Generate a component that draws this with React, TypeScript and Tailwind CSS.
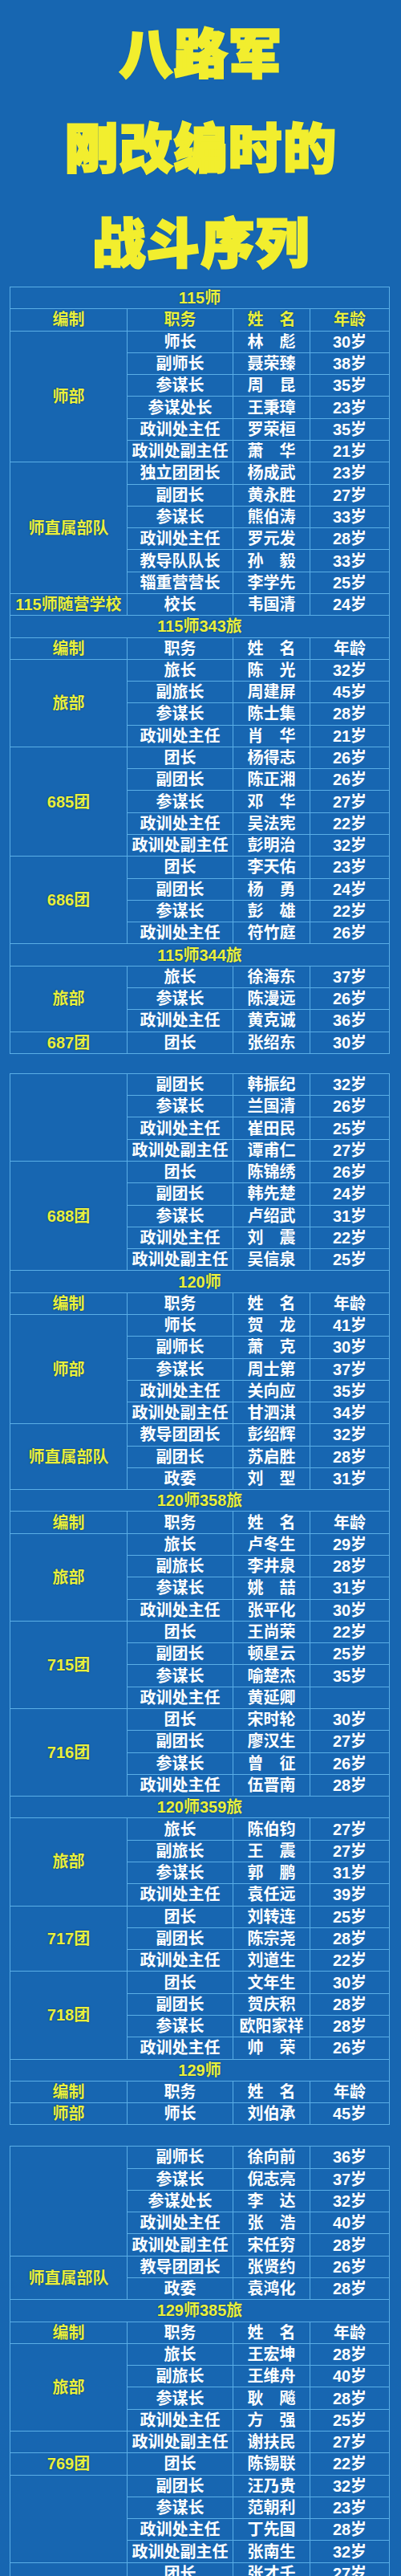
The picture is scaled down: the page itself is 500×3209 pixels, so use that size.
import React from 'react';
import clsx from 'clsx';

type Row = [string, string, string];
type Item =
  | { kind: 'title'; text: string }
  | { kind: 'header'; allYellow?: boolean }
  | { kind: 'group'; label: string; rows: Row[] };

const span: Record<number, string> = {
  1: 'row-span-1',
  2: 'row-span-2',
  3: 'row-span-3',
  4: 'row-span-4',
  5: 'row-span-5',
  6: 'row-span-6',
};

const partA: Item[] = [
  { kind: 'title', text: '115师' },
  { kind: 'header', allYellow: true },
  {
    kind: 'group',
    label: '师部',
    rows: [
      ['师长', '林　彪', '30岁'],
      ['副师长', '聂荣臻', '38岁'],
      ['参谋长', '周　昆', '35岁'],
      ['参谋处长', '王秉璋', '23岁'],
      ['政训处主任', '罗荣桓', '35岁'],
      ['政训处副主任', '萧　华', '21岁'],
    ],
  },
  {
    kind: 'group',
    label: '师直属部队',
    rows: [
      ['独立团团长', '杨成武', '23岁'],
      ['副团长', '黄永胜', '27岁'],
      ['参谋长', '熊伯涛', '33岁'],
      ['政训处主任', '罗元发', '28岁'],
      ['教导队队长', '孙　毅', '33岁'],
      ['辎重营营长', '李学先', '25岁'],
    ],
  },
  { kind: 'group', label: '115师随营学校', rows: [['校长', '韦国清', '24岁']] },
  { kind: 'title', text: '115师343旅' },
  { kind: 'header' },
  {
    kind: 'group',
    label: '旅部',
    rows: [
      ['旅长', '陈　光', '32岁'],
      ['副旅长', '周建屏', '45岁'],
      ['参谋长', '陈士集', '28岁'],
      ['政训处主任', '肖　华', '21岁'],
    ],
  },
  {
    kind: 'group',
    label: '685团',
    rows: [
      ['团长', '杨得志', '26岁'],
      ['副团长', '陈正湘', '26岁'],
      ['参谋长', '邓　华', '27岁'],
      ['政训处主任', '吴法宪', '22岁'],
      ['政训处副主任', '彭明治', '32岁'],
    ],
  },
  {
    kind: 'group',
    label: '686团',
    rows: [
      ['团长', '李天佑', '23岁'],
      ['副团长', '杨　勇', '24岁'],
      ['参谋长', '彭　雄', '22岁'],
      ['政训处主任', '符竹庭', '26岁'],
    ],
  },
  { kind: 'title', text: '115师344旅' },
  {
    kind: 'group',
    label: '旅部',
    rows: [
      ['旅长', '徐海东', '37岁'],
      ['参谋长', '陈漫远', '26岁'],
      ['政训处主任', '黄克诚', '36岁'],
    ],
  },
  { kind: 'group', label: '687团', rows: [['团长', '张绍东', '30岁']] },
];

const partB: Item[] = [
  {
    kind: 'group',
    label: '',
    rows: [
      ['副团长', '韩振纪', '32岁'],
      ['参谋长', '兰国清', '26岁'],
      ['政训处主任', '崔田民', '25岁'],
      ['政训处副主任', '谭甫仁', '27岁'],
    ],
  },
  {
    kind: 'group',
    label: '688团',
    rows: [
      ['团长', '陈锦绣', '26岁'],
      ['副团长', '韩先楚', '24岁'],
      ['参谋长', '卢绍武', '31岁'],
      ['政训处主任', '刘　震', '22岁'],
      ['政训处副主任', '吴信泉', '25岁'],
    ],
  },
  { kind: 'title', text: '120师' },
  { kind: 'header' },
  {
    kind: 'group',
    label: '师部',
    rows: [
      ['师长', '贺　龙', '41岁'],
      ['副师长', '萧　克', '30岁'],
      ['参谋长', '周士第', '37岁'],
      ['政训处主任', '关向应', '35岁'],
      ['政训处副主任', '甘泗淇', '34岁'],
    ],
  },
  {
    kind: 'group',
    label: '师直属部队',
    rows: [
      ['教导团团长', '彭绍辉', '32岁'],
      ['副团长', '苏启胜', '28岁'],
      ['政委', '刘　型', '31岁'],
    ],
  },
  { kind: 'title', text: '120师358旅' },
  { kind: 'header' },
  {
    kind: 'group',
    label: '旅部',
    rows: [
      ['旅长', '卢冬生', '29岁'],
      ['副旅长', '李井泉', '28岁'],
      ['参谋长', '姚　喆', '31岁'],
      ['政训处主任', '张平化', '30岁'],
    ],
  },
  {
    kind: 'group',
    label: '715团',
    rows: [
      ['团长', '王尚荣', '22岁'],
      ['副团长', '顿星云', '25岁'],
      ['参谋长', '喻楚杰', '35岁'],
      ['政训处主任', '黄延卿', ''],
    ],
  },
  {
    kind: 'group',
    label: '716团',
    rows: [
      ['团长', '宋时轮', '30岁'],
      ['副团长', '廖汉生', '27岁'],
      ['参谋长', '曾　征', '26岁'],
      ['政训处主任', '伍晋南', '28岁'],
    ],
  },
  { kind: 'title', text: '120师359旅' },
  {
    kind: 'group',
    label: '旅部',
    rows: [
      ['旅长', '陈伯钧', '27岁'],
      ['副旅长', '王　震', '27岁'],
      ['参谋长', '郭　鹏', '31岁'],
      ['政训处主任', '袁任远', '39岁'],
    ],
  },
  {
    kind: 'group',
    label: '717团',
    rows: [
      ['团长', '刘转连', '25岁'],
      ['副团长', '陈宗尧', '28岁'],
      ['政训处主任', '刘道生', '22岁'],
    ],
  },
  {
    kind: 'group',
    label: '718团',
    rows: [
      ['团长', '文年生', '30岁'],
      ['副团长', '贺庆积', '28岁'],
      ['参谋长', '欧阳家祥', '28岁'],
      ['政训处主任', '帅　荣', '26岁'],
    ],
  },
  { kind: 'title', text: '129师' },
  { kind: 'header' },
  { kind: 'group', label: '师部', rows: [['师长', '刘伯承', '45岁']] },
];

const partC: Item[] = [
  {
    kind: 'group',
    label: '',
    rows: [
      ['副师长', '徐向前', '36岁'],
      ['参谋长', '倪志亮', '37岁'],
      ['参谋处长', '李　达', '32岁'],
      ['政训处主任', '张　浩', '40岁'],
      ['政训处副主任', '宋任穷', '28岁'],
    ],
  },
  {
    kind: 'group',
    label: '师直属部队',
    rows: [
      ['教导团团长', '张贤约', '26岁'],
      ['政委', '袁鸿化', '28岁'],
    ],
  },
  { kind: 'title', text: '129师385旅' },
  { kind: 'header' },
  {
    kind: 'group',
    label: '旅部',
    rows: [
      ['旅长', '王宏坤', '28岁'],
      ['副旅长', '王维舟', '40岁'],
      ['参谋长', '耿　飚', '28岁'],
      ['政训处主任', '方　强', '25岁'],
    ],
  },
  { kind: 'group', label: '', rows: [['政训处副主任', '谢扶民', '27岁']] },
  { kind: 'group', label: '769团', rows: [['团长', '陈锡联', '22岁']] },
  {
    kind: 'group',
    label: '',
    rows: [
      ['副团长', '汪乃贵', '32岁'],
      ['参谋长', '范朝利', '23岁'],
      ['政训处主任', '丁先国', '28岁'],
      ['政训处副主任', '张南生', '32岁'],
    ],
  },
  { kind: 'group', label: '', rows: [['团长', '张才千', '27岁']] },
];

const Cell: React.FC<{ yellow?: boolean; className?: string; children?: React.ReactNode }> = ({
  yellow,
  className,
  children,
}) => (
  <div
    className={clsx(
      'flex items-center justify-center bg-[#1766b1] text-[20px] font-bold leading-none whitespace-nowrap',
      yellow ? 'text-[#e8f03c] [text-shadow:0_0_2px_rgba(0,25,70,0.7)]' : 'text-white',
      className,
    )}
  >
    {children}
  </div>
);

const Table: React.FC<{ items: Item[]; className?: string }> = ({ items, className }) => (
  <div
    className={clsx(
      'ml-[12px] grid w-[474px] grid-cols-[145px_131px_95px_98px] auto-rows-[26.29px] gap-px bg-[#5aaee6] p-px',
      className,
    )}
  >
    {items.map((it, i) => {
      if (it.kind === 'title') {
        return (
          <Cell key={i} yellow className="col-span-4">
            {it.text}
          </Cell>
        );
      }
      if (it.kind === 'header') {
        return (
          <React.Fragment key={i}>
            <Cell yellow>编制</Cell>
            <Cell yellow={it.allYellow}>职务</Cell>
            <Cell yellow={it.allYellow}>姓　名</Cell>
            <Cell yellow={it.allYellow}>年龄</Cell>
          </React.Fragment>
        );
      }
      return (
        <React.Fragment key={i}>
          <Cell yellow className={span[it.rows.length]}>
            {it.label}
          </Cell>
          {it.rows.map((r, j) => (
            <React.Fragment key={j}>
              <Cell>{r[0]}</Cell>
              <Cell>{r[1]}</Cell>
              <Cell>{r[2]}</Cell>
            </React.Fragment>
          ))}
        </React.Fragment>
      );
    })}
  </div>
);

export default function App() {
  return (
    <div className="h-[3209px] w-[500px] overflow-hidden bg-[#1766b1] font-['Liberation_Sans','Noto_Sans_CJK_SC',sans-serif]">
      {/* 标题 */}
      <div className="h-[357px] pt-[3px] pl-[2px] text-center font-['Noto_Sans_CJK_SC',sans-serif] text-[66px] font-black leading-[118px] tracking-[2px] text-[#f2ee2e] [-webkit-text-stroke:3px_#f2ee2e] [text-shadow:0_0_3px_rgba(0,30,80,0.6)]">
        <div>八路军</div>
        <div>刚改编时的</div>
        <div>战斗序列</div>
      </div>

      <Table items={partA} />
      <Table items={partB} className="mt-[24px]" />
      <Table items={partC} className="mt-[26px]" />
    </div>
  );
}
